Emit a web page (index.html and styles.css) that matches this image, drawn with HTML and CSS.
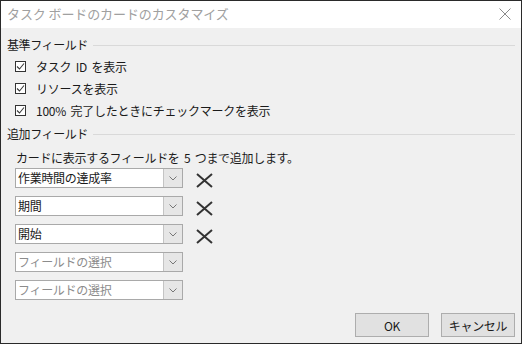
FILE: index.html
```html
<!DOCTYPE html>
<html lang="ja">
<head>
    <meta charset="UTF-8">
    <meta name="viewport" content="width=device-width, initial-scale=1.0">
    <title>タスク ボードのカードのカスタマイズ</title>
    <link rel="stylesheet" href="styles.css">
</head>
<body>
    <div class="dialog">
        <div class="title-bar">
            <span class="title">タスク ボードのカードのカスタマイズ</span>
            <svg class="close" width="12" height="12" viewBox="0 0 12 12">
                <path d="M0.5 0.5 L11.5 11.5 M11.5 0.5 L0.5 11.5" stroke="#8a8a8a" stroke-width="1" fill="none"/>
            </svg>
        </div>

        <div class="content">
            <div class="section-title"><span>基準フィールド</span></div>
            <div class="checks">
                <label class="check-row"><span class="box"><svg width="9" height="9" viewBox="0 0 9 9"><path d="M1 4.5 L3.5 7 L8 1.5" stroke="#3a3a3a" stroke-width="1.1" fill="none"/></svg></span>タスク ID を表示</label>
                <label class="check-row"><span class="box"><svg width="9" height="9" viewBox="0 0 9 9"><path d="M1 4.5 L3.5 7 L8 1.5" stroke="#3a3a3a" stroke-width="1.1" fill="none"/></svg></span>リソースを表示</label>
                <label class="check-row"><span class="box"><svg width="9" height="9" viewBox="0 0 9 9"><path d="M1 4.5 L3.5 7 L8 1.5" stroke="#3a3a3a" stroke-width="1.1" fill="none"/></svg></span>100% 完了したときにチェックマークを表示</label>
            </div>

            <div class="section-title second"><span>追加フィールド</span></div>
            <div class="desc">カードに表示するフィールドを 5 つまで追加します。</div>

            <div class="fields">
                <div class="field-row">
                    <div class="select"><span class="value">作業時間の達成率</span><span class="arrow"><svg width="8" height="5" viewBox="0 0 8 5"><path d="M0.5 0.5 L4 4 L7.5 0.5" stroke="#777" stroke-width="1" fill="none"/></svg></span></div>
                    <svg class="remove" width="17" height="15" viewBox="0 0 17 15"><path d="M1 1 L16 14 M16 1 L1 14" stroke="#333" stroke-width="2" fill="none"/></svg>
                </div>
                <div class="field-row">
                    <div class="select"><span class="value">期間</span><span class="arrow"><svg width="8" height="5" viewBox="0 0 8 5"><path d="M0.5 0.5 L4 4 L7.5 0.5" stroke="#777" stroke-width="1" fill="none"/></svg></span></div>
                    <svg class="remove" width="17" height="15" viewBox="0 0 17 15"><path d="M1 1 L16 14 M16 1 L1 14" stroke="#333" stroke-width="2" fill="none"/></svg>
                </div>
                <div class="field-row">
                    <div class="select"><span class="value">開始</span><span class="arrow"><svg width="8" height="5" viewBox="0 0 8 5"><path d="M0.5 0.5 L4 4 L7.5 0.5" stroke="#777" stroke-width="1" fill="none"/></svg></span></div>
                    <svg class="remove" width="17" height="15" viewBox="0 0 17 15"><path d="M1 1 L16 14 M16 1 L1 14" stroke="#333" stroke-width="2" fill="none"/></svg>
                </div>
                <div class="field-row">
                    <div class="select"><span class="value placeholder">フィールドの選択</span><span class="arrow"><svg width="8" height="5" viewBox="0 0 8 5"><path d="M0.5 0.5 L4 4 L7.5 0.5" stroke="#777" stroke-width="1" fill="none"/></svg></span></div>
                </div>
                <div class="field-row">
                    <div class="select"><span class="value placeholder">フィールドの選択</span><span class="arrow"><svg width="8" height="5" viewBox="0 0 8 5"><path d="M0.5 0.5 L4 4 L7.5 0.5" stroke="#777" stroke-width="1" fill="none"/></svg></span></div>
                </div>
            </div>

            <div class="footer">
                <button class="btn">OK</button>
                <button class="btn">キャンセル</button>
            </div>
        </div>
    </div>
</body>
</html>
```

FILE: styles.css
```css
* {
    box-sizing: border-box;
}

body {
    margin: 0;
    padding: 0;
    font-family: "Noto Sans CJK JP", "Noto Sans", sans-serif;
    font-size: 12px;
    color: #1a1a1a;
    background-color: #f0f0f0;
}

.dialog {
    width: 522px;
    height: 344px;
    border: 1px solid #2a2a2a;
    background-color: #f0f0f0;
    display: flex;
    flex-direction: column;
}

.title-bar {
    height: 27px;
    background-color: #ffffff;
    display: flex;
    align-items: center;
    justify-content: space-between;
    padding: 0 10px 3px 6px;
}

.title {
    font-size: 13px;
    color: #a0a0a0;
    letter-spacing: -0.1px;
}

.close {
    margin-top: 2px;
}

.content {
    flex: 1;
    display: flex;
    flex-direction: column;
    padding: 8px 6px 6px 6px;
}

.section-title {
    height: 18px;
    line-height: 18px;
    display: flex;
    align-items: center;
    letter-spacing: -0.4px;
}

.section-title::after {
    content: "";
    flex: 1;
    height: 1px;
    background-color: #d9d9d9;
    margin-left: 5px;
}

.section-title.second {
    margin-top: 4px;
}

.checks {
    margin-top: 1px;
    padding-left: 8px;
}

.check-row {
    height: 22px;
    display: flex;
    align-items: center;
    letter-spacing: -0.25px;
    word-spacing: 2px;
}

.box {
    width: 11px;
    height: 11px;
    border: 1px solid #333;
    background-color: #fff;
    display: flex;
    align-items: center;
    justify-content: center;
    margin-right: 10px;
}

.desc {
    margin-top: 6px;
    height: 18px;
    line-height: 18px;
    padding-left: 9px;
    letter-spacing: -0.3px;
    word-spacing: 2px;
}

.fields {
    margin-top: 1px;
    padding-left: 8px;
    display: flex;
    flex-direction: column;
    gap: 8px;
}

.field-row {
    height: 20px;
    display: flex;
    align-items: center;
}

.select {
    width: 168px;
    height: 20px;
    background-color: #fff;
    border: 1px solid #a9a9a9;
    display: flex;
    align-items: stretch;
}

.value {
    flex: 1;
    line-height: 18px;
    padding-left: 2px;
    letter-spacing: -0.3px;
}

.placeholder {
    color: #8c8c8c;
}

.arrow {
    width: 19px;
    background-color: #e6e6e6;
    border-left: 1px solid #c4c4c4;
    display: flex;
    align-items: center;
    justify-content: center;
}

.remove {
    margin-left: 13px;
    margin-top: 5px;
}

.footer {
    margin-top: auto;
    display: flex;
    justify-content: flex-end;
    gap: 12px;
}

.btn {
    width: 74px;
    height: 24px;
    font-family: "Noto Sans CJK JP", "Noto Sans", sans-serif;
    font-size: 12px;
    color: #1a1a1a;
    background-color: #e1e1e1;
    border: 1px solid #adadad;
    padding: 0;
    letter-spacing: -0.3px;
}
```
